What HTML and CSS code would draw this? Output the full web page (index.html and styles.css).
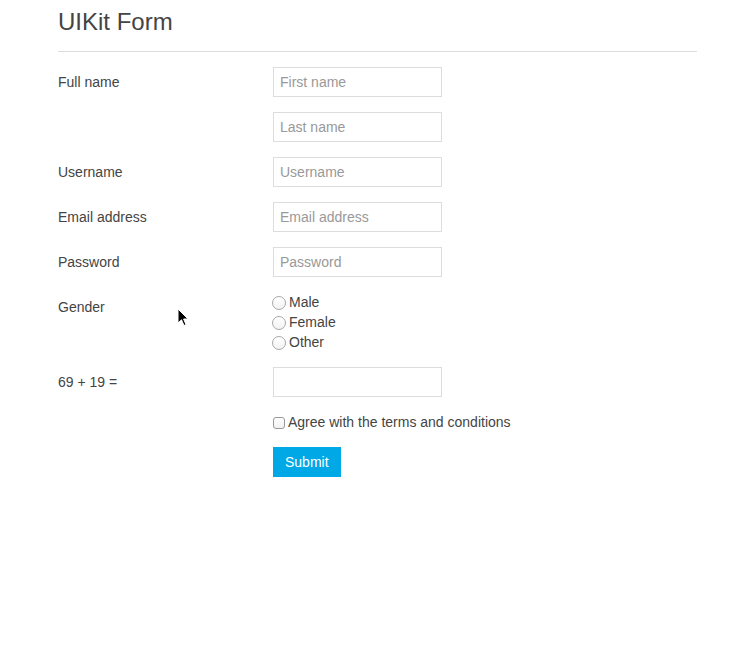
FILE: index.html
```html
<!DOCTYPE html>
<html>
<head>
<meta charset="utf-8">
<title>UIKit Form</title>
<link rel="stylesheet" href="styles.css">
</head>
<body>
<div class="page">
  <h2 class="title">UIKit Form</h2>
  <hr class="divider">
  <form class="form">
    <div class="row">
      <label class="label">Full name</label>
      <div class="controls">
        <input class="input" type="text" placeholder="First name">
      </div>
    </div>
    <div class="row">
      <div class="label"></div>
      <div class="controls">
        <input class="input" type="text" placeholder="Last name">
      </div>
    </div>
    <div class="row">
      <label class="label">Username</label>
      <div class="controls">
        <input class="input" type="text" placeholder="Username">
      </div>
    </div>
    <div class="row">
      <label class="label">Email address</label>
      <div class="controls">
        <input class="input" type="text" placeholder="Email address">
      </div>
    </div>
    <div class="row">
      <label class="label">Password</label>
      <div class="controls">
        <input class="input" type="password" placeholder="Password">
      </div>
    </div>
    <div class="row">
      <span class="label">Gender</span>
      <div class="controls text">
        <label class="choice"><input class="radio" type="radio" name="g">Male</label>
        <label class="choice"><input class="radio" type="radio" name="g">Female</label>
        <label class="choice"><input class="radio" type="radio" name="g">Other</label>
      </div>
    </div>
    <div class="row">
      <label class="label">69 + 19 =</label>
      <div class="controls">
        <input class="input" type="text">
      </div>
    </div>
    <div class="row">
      <div class="label"></div>
      <div class="controls text">
        <label class="choice"><input class="check" type="checkbox">Agree with the terms and conditions</label>
      </div>
    </div>
    <div class="row">
      <div class="label"></div>
      <div class="controls">
        <button class="button" type="button">Submit</button>
      </div>
    </div>
  </form>
  <svg class="cursor" width="12" height="19" viewBox="0 0 12 19">
    <path d="M1 1 L1 15 L4.5 11.8 L7 17.5 L9 16.6 L6.6 11 L11 11 Z" fill="#000" stroke="#fff" stroke-width="1"/>
  </svg>
</div>
</body>
</html>
```

FILE: styles.css
```css
html, body {
  margin: 0;
  padding: 0;
  background: #fff;
}

body {
  font-family: "Liberation Sans", Arial, sans-serif;
  font-size: 14px;
  line-height: 20px;
  color: #444;
}

.page {
  position: relative;
  width: 639px;
  margin-left: 58px;
}

.title {
  margin: 7px 0 0;
  font-size: 24px;
  line-height: 30px;
  font-weight: normal;
  color: #444;
}

.divider {
  margin: 14px 0 15px;
  border: 0;
  border-top: 1px solid #ddd;
  height: 0;
}

.form {
  margin: 0;
}

.row {
  display: grid;
  grid-template-columns: 200px auto;
  column-gap: 15px;
  margin-bottom: 15px;
}

.label {
  margin-top: 5px;
  line-height: 20px;
}

.controls {
  display: flex;
  flex-direction: column;
  align-items: flex-start;
}

.input {
  box-sizing: border-box;
  width: 169px;
  height: 30px;
  margin: 0;
  padding: 4px 6px;
  border: 1px solid #ddd;
  border-radius: 0;
  background: #fff;
  color: #444;
  font-family: "Liberation Sans", Arial, sans-serif;
  font-size: 14px;
  line-height: 20px;
  outline: none;
}

.input::placeholder {
  color: #999;
  opacity: 1;
}

.choice {
  display: flex;
  align-items: center;
  height: 20px;
  line-height: 20px;
}

.radio {
  appearance: none;
  -webkit-appearance: none;
  box-sizing: border-box;
  width: 14px;
  height: 14px;
  margin: 1px 3px 0 -1px;
  border: 1px solid #a9a9a9;
  border-radius: 50%;
  background: linear-gradient(#fff, #f2f2f2);
}

.check {
  appearance: none;
  -webkit-appearance: none;
  box-sizing: border-box;
  width: 12px;
  height: 12px;
  margin: 1px 3px 0 0;
  border: 1px solid #999;
  border-radius: 3px;
  background: linear-gradient(#fff, #f2f2f2);
}

.button {
  height: 30px;
  margin: 0;
  padding: 0 12px;
  border: 0;
  border-radius: 0;
  background: #00a8e6;
  color: #fff;
  font-family: "Liberation Sans", Arial, sans-serif;
  font-size: 14px;
  line-height: 30px;
}

.cursor {
  position: absolute;
  left: 119px;
  top: 301px;
}
```
